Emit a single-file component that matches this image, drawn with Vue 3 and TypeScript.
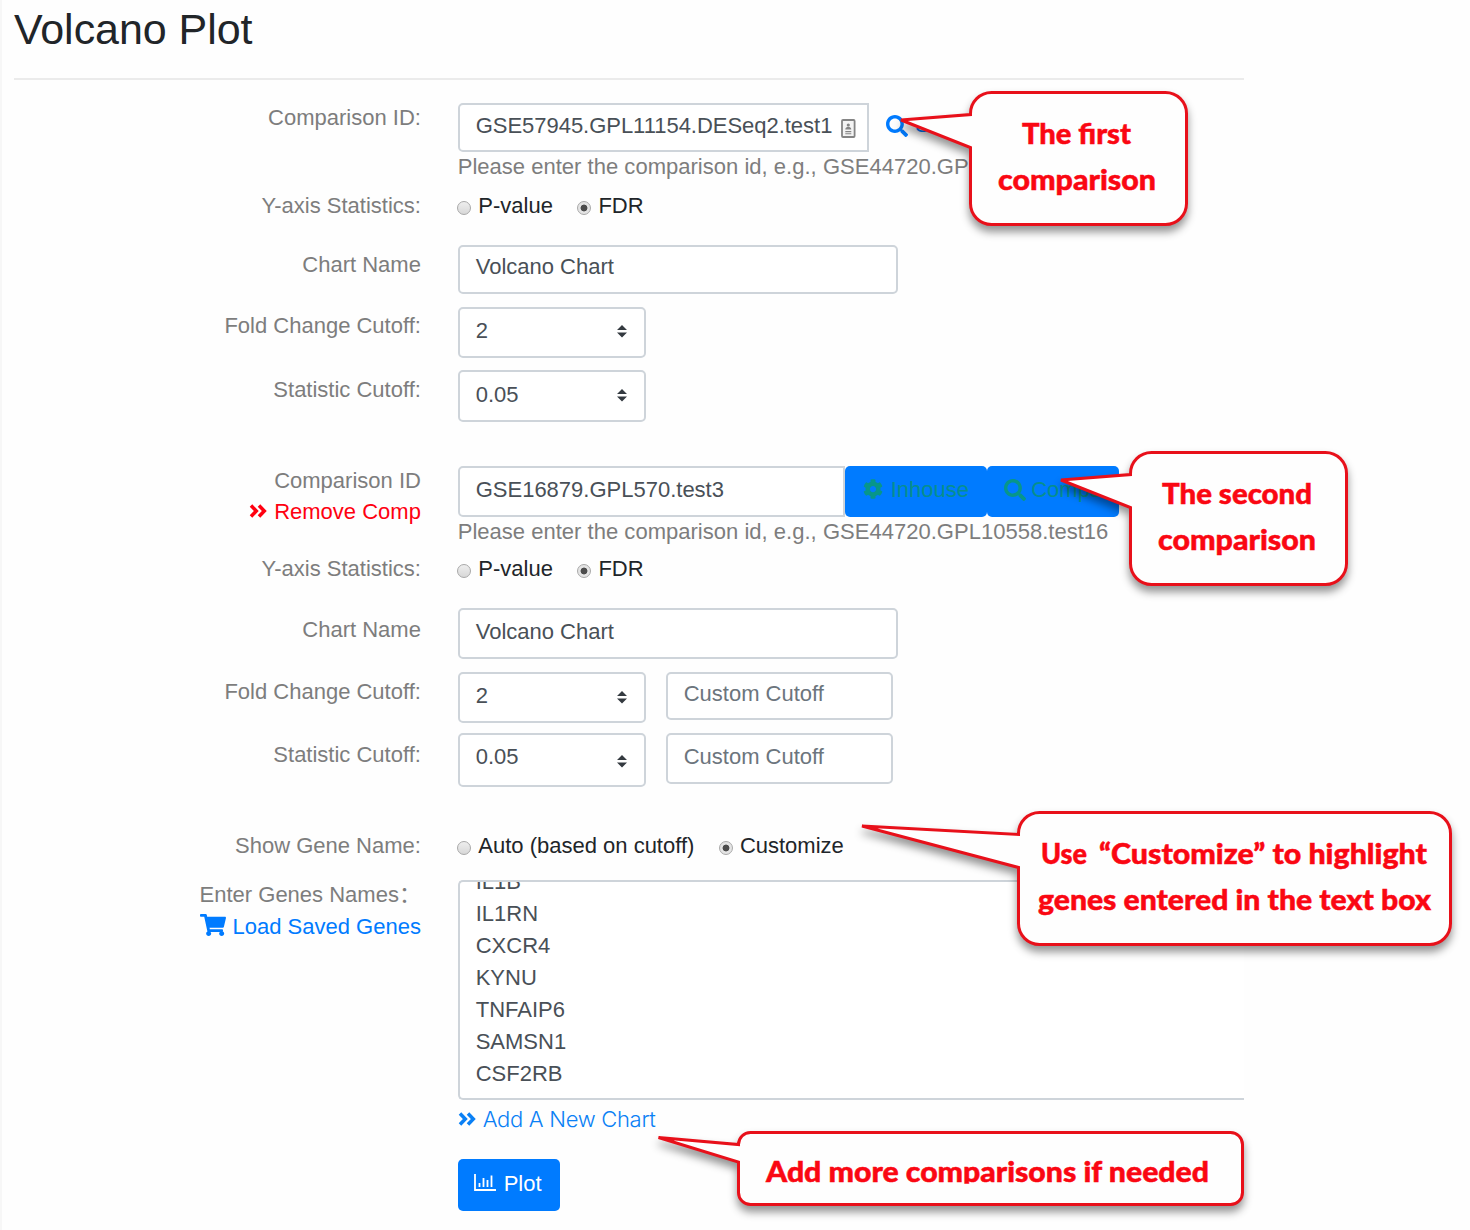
<script setup lang="ts">
interface Line { text: string; x: number; y: number; w: number }
interface Callout { left: number; top: number; right: number; bottom: number; r: number; tip: [number, number]; a: number; b: number; lines: Line[] }

const genes: string[] = ['IL1B', 'IL1RN', 'CXCR4', 'KYNU', 'TNFAIP6', 'SAMSN1', 'CSF2RB']

const callouts: Callout[] = [
  { left: 970.5, top: 92.5, right: 1186.5, bottom: 224.5, r: 21, tip: [901, 120], a: 114.5, b: 147.5, lines: [
    { text: 'The first', x: 1022, y: 144, w: 109 }, { text: 'comparison', x: 998, y: 190, w: 158 }] },
  { left: 1130.5, top: 452.5, right: 1346.5, bottom: 584.5, r: 21, tip: [1061, 480], a: 474.5, b: 507.5, lines: [
    { text: 'The second', x: 1162, y: 504, w: 150 }, { text: 'comparison', x: 1158, y: 550, w: 158 }] },
  { left: 1018.5, top: 812.5, right: 1450.5, bottom: 944.5, r: 21, tip: [862, 826], a: 834.5, b: 867.5, lines: [
    { text: 'Use', x: 1041, y: 864, w: 46 }, { text: '“Customize” to highlight', x: 1099, y: 864, w: 328 }, { text: 'genes entered in the text box', x: 1038, y: 910, w: 393 }] },
  { left: 738.5, top: 1132.5, right: 1242.5, bottom: 1204.5, r: 12, tip: [658.5, 1137.5], a: 1144.5, b: 1162, lines: [
    { text: 'Add more comparisons if needed', x: 766, y: 1182, w: 443 }] },
]

function outline(c: Callout): string {
  const { left: l, top: t, right: R, bottom: B, r } = c
  return `M${l} ${c.a}V${t + r}A${r} ${r} 0 0 1 ${l + r} ${t}H${R - r}A${r} ${r} 0 0 1 ${R} ${t + r}V${B - r}A${r} ${r} 0 0 1 ${R - r} ${B}H${l + r}A${r} ${r} 0 0 1 ${l} ${B - r}V${c.b}L${c.tip[0]} ${c.tip[1]}Z`
}

const searchIcon = 'M505 442.7L405.3 343c-4.5-4.5-10.6-7-17-7H372c27.6-35.3 44-79.7 44-128C416 93.1 322.9 0 208 0S0 93.1 0 208s93.1 208 208 208c48.3 0 92.7-16.4 128-44v16.3c0 6.4 2.5 12.5 7 17l99.7 99.7c9.4 9.4 24.6 9.4 33.9 0l28.3-28.3c9.4-9.4 9.4-24.6.1-34zM208 336c-70.7 0-128-57.2-128-128 0-70.7 57.2-128 128-128 70.7 0 128 57.2 128 128 0 70.7-57.2 128-128 128z'
const cogIcon = 'M487.4 315.7l-42.6-24.6c4.3-23.2 4.3-47 0-70.2l42.6-24.6c4.9-2.8 7.1-8.6 5.5-14-11.1-35.6-30-67.8-54.7-94.6-3.8-4.1-10-5.1-14.8-2.3L380.8 110c-17.9-15.4-38.5-27.3-60.8-35.1V25.8c0-5.6-3.9-10.5-9.4-11.7-36.7-8.2-74.3-7.8-109.2 0-5.5 1.2-9.4 6.1-9.4 11.7V75c-22.2 7.9-42.8 19.8-60.8 35.1L88.7 85.5c-4.9-2.8-11-1.9-14.8 2.3-24.7 26.7-43.6 58.9-54.7 94.6-1.7 5.4.6 11.2 5.5 14L67.3 221c-4.3 23.2-4.3 47 0 70.2l-42.6 24.6c-4.9 2.8-7.1 8.6-5.5 14 11.1 35.6 30 67.8 54.7 94.6 3.8 4.1 10 5.1 14.8 2.3l42.6-24.6c17.9 15.4 38.5 27.3 60.8 35.1v49.2c0 5.6 3.9 10.5 9.4 11.7 36.7 8.2 74.3 7.8 109.2 0 5.5-1.2 9.4-6.1 9.4-11.7v-49.2c22.2-7.9 42.8-19.8 60.8-35.1l42.6 24.6c4.9 2.8 11 1.9 14.8-2.3 24.7-26.7 43.6-58.9 54.7-94.6 1.5-5.5-.7-11.3-5.6-14.1zM256 336c-44.1 0-80-35.9-80-80s35.9-80 80-80 80 35.9 80 80-35.9 80-80 80z'
const cartIcon = 'M528.12 301.319l47.273-208C578.806 78.301 567.391 64 551.99 64H159.208l-9.166-44.81C147.758 8.021 137.93 0 126.529 0H24C10.745 0 0 10.745 0 24v16c0 13.255 10.745 24 24 24h69.883l70.248 343.435C147.325 417.1 136 435.222 136 456c0 30.928 25.072 56 56 56s56-25.072 56-56c0-15.674-6.447-29.835-16.824-40h209.647C430.447 426.165 424 440.326 424 456c0 30.928 25.072 56 56 56s56-25.072 56-56c0-22.172-12.888-41.332-31.579-50.405l5.517-24.276c3.413-15.018-8.002-29.319-23.403-29.319H218.117l-6.545-32h293.145c11.206 0 20.92-7.754 23.403-18.681z'
</script>

<template>
  <main class="page">
    <h1>Volcano Plot</h1>
    <form class="form">
      <section class="row comp-first">
        <label>Comparison ID:</label>
        <div class="stack">
          <div class="line">
            <div class="box id-one"><span>GSE57945.GPL11154.DESeq2.test1</span>
              <svg class="contact" viewBox="0 0 15 19"><rect x="1" y="1" width="12.6" height="17" rx="1" fill="#f4f4f4" stroke="#858585" stroke-width="1.8" /><circle cx="7.3" cy="6" r="1.6" fill="#858585" /><path d="M4.3 10.4c0-3.4 6-3.4 6 0zM4.3 12h6v1.2h-6zM4.3 14.2h6v1h-6z" fill="#858585" /></svg>
            </div>
            <a class="search"><svg viewBox="0 0 512 512"><path :d="searchIcon" /></svg><span>S</span></a>
          </div>
          <p class="help">Please enter the comparison id, e.g., GSE44720.GP</p>
        </div>
      </section>
      <section class="row axis">
        <label>Y-axis Statistics:</label>
        <div class="radios"><i class="radio"></i><span>P-value</span><i class="radio on"></i><span>FDR</span></div>
      </section>
      <section class="row chart-first">
        <label>Chart Name</label>
        <div class="box name">Volcano Chart</div>
      </section>
      <section class="row fold-first">
        <label>Fold Change Cutoff:</label>
        <div class="box select">2<svg viewBox="0 0 10 13"><path d="M5 0L10 5H0zM0 7.6H10L5 12.6z" /></svg></div>
      </section>
      <section class="row stat-first">
        <label>Statistic Cutoff:</label>
        <div class="box select">0.05<svg viewBox="0 0 10 13"><path d="M5 0L10 5H0zM0 7.6H10L5 12.6z" /></svg></div>
      </section>

      <section class="row comp-second">
        <label><span class="caption">Comparison ID</span><a class="remove"><svg viewBox="0 0 18 14"><path d="M2 1.5L7.3 7 2 12.5M10 1.5L15.3 7 10 12.5" /></svg>Remove Comp</a></label>
        <div class="stack">
          <div class="line">
            <div class="box id-two">GSE16879.GPL570.test3</div>
            <button type="button" class="btn inhouse"><svg viewBox="0 0 512 512"><path :d="cogIcon" /></svg><span>Inhouse</span></button>
            <button type="button" class="btn comps"><svg viewBox="0 0 512 512"><path :d="searchIcon" /></svg><span>Comps</span></button>
          </div>
          <p class="help">Please enter the comparison id, e.g., GSE44720.GPL10558.test16</p>
        </div>
      </section>
      <section class="row axis">
        <label>Y-axis Statistics:</label>
        <div class="radios"><i class="radio"></i><span>P-value</span><i class="radio on"></i><span>FDR</span></div>
      </section>
      <section class="row chart-second">
        <label>Chart Name</label>
        <div class="box name">Volcano Chart</div>
      </section>
      <section class="row fold-second">
        <label>Fold Change Cutoff:</label>
        <div class="box select">2<svg viewBox="0 0 10 13"><path d="M5 0L10 5H0zM0 7.6H10L5 12.6z" /></svg></div>
        <div class="box custom">Custom Cutoff</div>
      </section>
      <section class="row stat-second">
        <label>Statistic Cutoff:</label>
        <div class="box select">0.05<svg viewBox="0 0 10 13"><path d="M5 0L10 5H0zM0 7.6H10L5 12.6z" /></svg></div>
        <div class="box custom">Custom Cutoff</div>
      </section>

      <section class="row show">
        <label>Show Gene Name:</label>
        <div class="radios"><i class="radio"></i><span>Auto (based on cutoff)</span><i class="radio on"></i><span>Customize</span></div>
      </section>
      <section class="row genes">
        <label><span class="enter">Enter Genes Names：</span><a class="load"><svg viewBox="0 0 576 512" preserveAspectRatio="none"><path :d="cartIcon" /></svg>Load Saved Genes</a></label>
        <div class="area"><div v-for="g in genes" :key="g">{{ g }}</div></div>
      </section>
      <section class="row add">
        <label></label>
        <a class="new"><svg viewBox="0 0 18 14"><path d="M2 1.5L7.3 7 2 12.5M10 1.5L15.3 7 10 12.5" /></svg>Add A New Chart</a>
      </section>
      <section class="row">
        <label></label>
        <button type="button" class="btn plot"><svg viewBox="0 0 22 17"><path d="M1 0V16H22M5.5 9V13M9.5 4V13M13.5 6V13M17.5 1.5V13" /></svg><span>Plot</span></button>
      </section>
    </form>

    <svg class="callouts" viewBox="0 0 1470 1230" width="1470" height="1230">
      <defs><clipPath id="strip"><rect x="0" y="0" width="1470" height="1183.8" /></clipPath></defs>
      <path v-for="(c, i) in callouts" :key="i" class="bubble" :d="outline(c)" />
      <g clip-path="url(#strip)">
        <template v-for="(c, i) in callouts" :key="i">
          <text v-for="l in c.lines" :key="l.text" :x="l.x" :y="l.y" :textLength="l.w" lengthAdjust="spacingAndGlyphs">{{ l.text }}</text>
        </template>
      </g>
    </svg>
  </main>
</template>

<style>
body { margin: 0; background: #fefefe; }
</style>
<style scoped>
* { box-sizing: border-box; }
.page { position: relative; width: 1470px; height: 1230px; overflow: hidden; border-left: 2px solid #f7f7f7; font: 22px/32px "Liberation Sans", Arial, sans-serif; color: #212529; }
h1 { margin: 0 0 0 12px; width: 1230px; height: 80px; border-bottom: 2px solid #ebebeb; font-size: 43px; font-weight: 400; line-height: 58px; letter-spacing: -0.05px; }
.form { padding-top: 20px; width: 1242px; }
.row { display: flex; align-items: flex-start; }
label { flex: none; width: 418.9px; margin-right: 36.8px; text-align: right; color: #7d7d7d; white-space: nowrap; }
.line { display: flex; align-items: flex-start; }
.help { margin: 0; color: #7d7d7d; white-space: nowrap; letter-spacing: 0.02px; }
.box { display: flex; flex: none; border: 2px solid #ced4da; border-radius: 5px; background: #fff; color: #495057; padding: 4px 0 0 16px; white-space: nowrap; }
svg { flex: none; display: block; }
.name { width: 440px; }
.select { width: 188px; height: 51px; padding-top: 6px; justify-content: space-between; padding-right: 17px; }
.select svg { width: 10px; height: 13px; margin-top: 11px; fill: #343a40; }
.custom { width: 227px; margin-left: 20px; color: #6c757d; }

.comp-first { height: 89px; }
.comp-first label { padding-top: 2px; }
.comp-first .stack { padding-top: 3px; }
.id-one { width: 411px; height: 49px; border-radius: 5px 0 0 5px; }
.id-one span { letter-spacing: -0.03px; padding-top: 0.5px; }
.contact { width: 15px; height: 19px; margin: 10px 0 0 9px; }
.search { display: flex; color: #007bff; margin-left: 17.5px; padding-top: 6px; }
.search svg { width: 22px; height: 22px; margin: 6px 7px 0 0; fill: currentColor; }
.comp-first .help { margin-top: -1px; }

.axis { height: 56px; }
.radios { display: flex; align-items: flex-start; white-space: nowrap; }
.radio { width: 14px; height: 14px; margin: 12px 7px 0 -0.4px; border: 1px solid #a9a9a9; border-radius: 50%; background: linear-gradient(#eee, #d8d8d8); }
.radios span + .radio { margin-left: 24.5px; }
.radio.on { background: radial-gradient(circle, #4c4c4c 0 3px, #e4e4e4 3.8px); }
.axis label, .axis span { padding-top: 1px; }

.chart-first { height: 61px; }
.chart-first label { padding-top: 4px; }
.chart-first .box { height: 49px; }
.fold-first { height: 64px; }
.fold-first label { padding-top: 4px; }
.stat-first { height: 95px; }
.stat-first label { padding-top: 4px; }
.fold-first .box { margin-top: 1px; height: 51px; padding-top: 6px; }
.fold-first .box svg { margin-top: 10px; }
.stat-first .box { height: 51.5px; padding-top: 7px; }
.stat-first .box svg { margin-top: 10px; }

.comp-second { height: 87px; }
.comp-second label { padding-top: 0; }
.caption { display: block; height: 31px; }
.remove { display: flex; justify-content: flex-end; color: #ff0010; }
.remove svg, .new svg { width: 18px; height: 14px; margin: 8px 7px 0 0; fill: none; stroke: currentColor; stroke-width: 3.5; }
.comp-second .line { padding-top: 0.5px; }
.id-two { width: 387px; height: 51.5px; border-radius: 5px 0 0 5px; padding-top: 6.5px; }
.btn { display: flex; align-items: flex-start; flex: none; height: 51.5px; margin: 0; border: 0; border-radius: 5px; background: #007bff; font: inherit; padding: 8.5px 0 0 18px; color: #078f8c; }
.btn svg { width: 20px; height: 20px; margin: 5px 8px 0 0; fill: #07968a; }
.inhouse { width: 142px; }
.comps { width: 132.5px; padding-left: 17.5px; }
.comps svg { width: 22px; height: 22px; margin-right: 5px; }
.comp-second .help { margin-top: -1px; }

.chart-second { height: 64px; }
.chart-second label { padding-top: 6px; }
.chart-second .box { height: 51px; padding-top: 6px; }
.fold-second { height: 61px; }
.fold-second label { padding-top: 3.5px; }
.fold-second .custom { height: 48px; padding-top: 4px; }
.stat-second { height: 96px; }
.stat-second label { padding-top: 6px; }
.stat-second .select { height: 54px; padding-top: 6px; }
.stat-second .select svg { margin-top: 14px; }
.stat-second .custom { height: 51px; padding-top: 6px; }

.show { height: 51px; }
.show label, .show span { padding-top: 1px; }
.genes { height: 223px; }
.genes label { display: flex; flex-direction: column; padding-top: 0; margin-top: -1px; }
.enter { height: 32px; font-family: "Liberation Sans", "Noto Sans CJK SC", sans-serif; }
.load { display: flex; justify-content: flex-end; color: #007bff; }
.load svg { width: 26px; height: 22px; margin: 3px 6.5px 0 0; fill: currentColor; }
.area { width: 786.3px; height: 220px; overflow: hidden; border: 2px solid #ced4da; border-right: 0; border-radius: 5px 0 0 5px; background: #fff; color: #495057; padding-left: 16px; }
.area div:first-child { margin-top: -16px; }
.add { height: 56px; }
.new { display: flex; color: #0a80f5; font-family: Inter, sans-serif; font-weight: 300; letter-spacing: -0.3px; white-space: nowrap; }
.new svg { margin-top: 9px; }
.plot { width: 102.7px; color: #fff; padding: 9px 0 0 16px; }
.plot svg { width: 22px; height: 17px; margin: 6px 8px 0 0; fill: none; stroke: #fff; stroke-width: 1.8; }

.callouts { position: absolute; left: -2px; top: 0; }
.bubble { fill: #fefefe; stroke: #e8101a; stroke-width: 3; filter: drop-shadow(0 6px 4px rgba(0, 0, 0, 0.42)); }
text { font-family: Lato, sans-serif; font-weight: 900; font-size: 28.5px; fill: #fa0712; stroke: #fa0712; stroke-width: 0.5; }
</style>
